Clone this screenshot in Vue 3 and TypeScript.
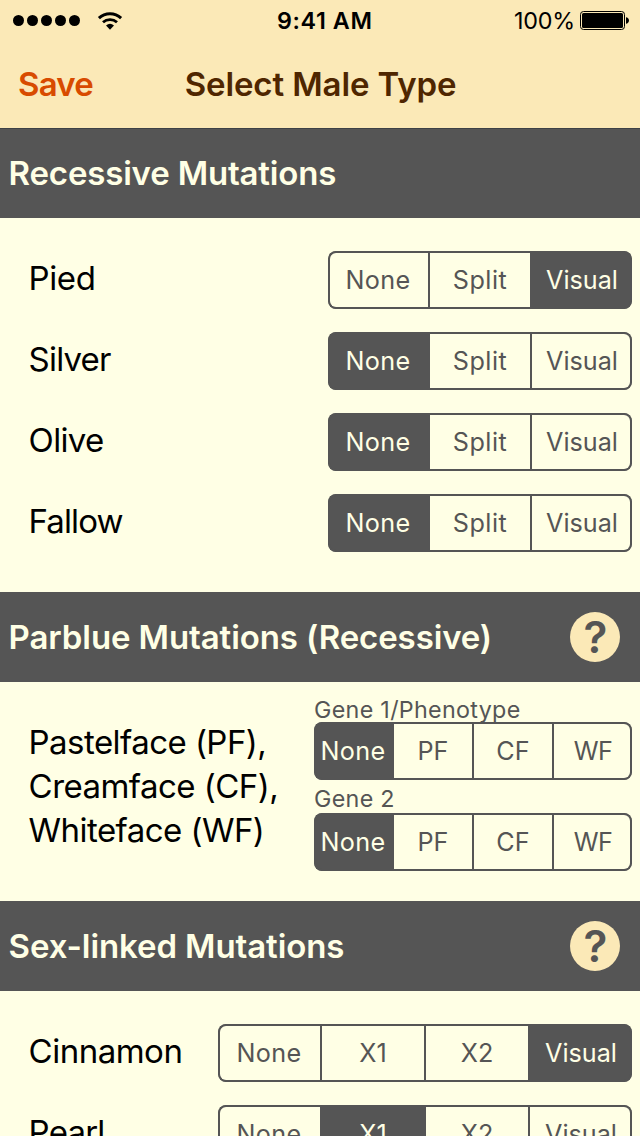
<script setup lang="ts">
import { reactive } from 'vue'

interface Picker {
  caption?: string
  options: string[]
  selected: number
}
interface Row {
  lines: string[]
  tracking: number
  pickers: Picker[]
}
interface Section {
  title: string
  kind: 'autosomal' | 'gene' | 'linked'
  help: boolean
  rows: Row[]
}

const split = ['None', 'Split', 'Visual']
const genes = ['None', 'PF', 'CF', 'WF']
const linked = ['None', 'X1', 'X2', 'Visual']

const row = (name: string, tracking: number, options: string[], selected: number): Row => ({
  lines: [name],
  tracking,
  pickers: [{ options, selected }],
})

const sections = reactive<Section[]>([
  {
    title: 'Recessive Mutations',
    kind: 'autosomal',
    help: false,
    rows: [
      row('Pied', -0.4, split, 2),
      row('Silver', -0.8, split, 0),
      row('Olive', -0.7, split, 0),
      row('Fallow', -0.9, split, 0),
    ],
  },
  {
    title: 'Parblue Mutations (Recessive)',
    kind: 'gene',
    help: true,
    rows: [
      {
        lines: ['Pastelface (PF),', 'Creamface (CF),', 'Whiteface (WF)'],
        tracking: -0.55,
        pickers: [
          { caption: 'Gene 1/Phenotype', options: genes, selected: 0 },
          { caption: 'Gene 2', options: genes, selected: 0 },
        ],
      },
    ],
  },
  {
    title: 'Sex-linked Mutations',
    kind: 'linked',
    help: true,
    rows: [row('Cinnamon', -0.5, linked, 3), row('Pearl', -0.8, linked, 1)],
  },
])
</script>

<template>
  <div class="screen">
    <header class="top">
      <div class="status">
        <div class="left">
          <i v-for="n in 5" :key="n" class="dot"></i>
          <svg class="wifi" width="26" height="20" viewBox="0 0 26 20">
            <path d="M1.9 7.1a16.2 16.2 0 0 1 22.2 0" fill="none" stroke="#000" stroke-width="3" />
            <path d="M6 11.3a10.3 10.3 0 0 1 14 0" fill="none" stroke="#000" stroke-width="2.8" />
            <path d="M9 14.4a6.2 6.2 0 0 1 8 0L13 18.7z" />
          </svg>
        </div>
        <div class="clock">9:41 AM</div>
        <div class="right">
          <span class="percent">100%</span>
          <svg class="battery" width="50" height="20" viewBox="0 0 50 20">
            <rect x=".5" y=".5" width="44" height="18" rx="3" fill="none" stroke="#000" />
            <rect x="2" y="2" width="41" height="15" rx="1.5" />
            <path d="M46 6.2c1.6.2 3 1.5 3 3.3s-1.4 3.1-3 3.3z" />
          </svg>
        </div>
      </div>
      <div class="nav">
        <button class="save">Save</button>
        <h1>Select Male Type</h1>
      </div>
    </header>

    <section v-for="s in sections" :key="s.title" :class="s.kind">
      <div class="heading">
        <h2>{{ s.title }}</h2>
        <button v-if="s.help" class="help">?</button>
      </div>
      <div class="body">
        <div v-for="r in s.rows" :key="r.lines[0]" class="row">
          <div class="label" :style="{ letterSpacing: r.tracking + 'px' }">
            <div v-for="l in r.lines" :key="l">{{ l }}</div>
          </div>
          <div class="pickers">
            <div v-for="(p, pi) in r.pickers" :key="pi">
              <div v-if="p.caption" class="caption">{{ p.caption }}</div>
              <div class="segments">
                <button
                  v-for="(o, i) in p.options"
                  :key="o"
                  :class="['segment', o.toLowerCase(), { on: i === p.selected }]"
                  @click="p.selected = i"
                >
                  {{ o }}
                </button>
              </div>
            </div>
          </div>
        </div>
      </div>
    </section>
  </div>
</template>

<style>
body {
  background: #ffffe5;
}
</style>

<style scoped>
.screen {
  width: 640px;
  height: 1136px;
  overflow: hidden;
  background: #ffffe5;
  color: #000;
  font-family: Inter, 'Liberation Sans', sans-serif;
}
button {
  border: 0;
  margin: 0;
  padding: 0;
  background: none;
  font-family: inherit;
}
h1,
h2 {
  margin: 0;
  font-size: 33px;
  font-weight: 600;
  white-space: nowrap;
}
.top {
  height: 128px;
  background: #fbe9b7;
}
.status {
  display: grid;
  grid-template-columns: 264px auto 1fr;
  height: 40px;
  padding: 0 10px 0 13px;
  font-size: 23.3px;
  line-height: 41px;
}
.left {
  display: flex;
  align-items: center;
  gap: 3px;
}
.dot {
  width: 11px;
  height: 11px;
  border-radius: 50%;
  background: #000;
}
.wifi {
  margin-left: 14px;
}
.clock {
  font-weight: 600;
  letter-spacing: 0.6px;
}
.right {
  display: flex;
  justify-content: flex-end;
}
.percent {
  letter-spacing: -0.2px;
}
.battery {
  margin: 11px 0 0 5px;
}
.nav {
  display: grid;
  grid-template-columns: 1fr auto 1fr;
  height: 88px;
  padding-left: 18px;
  line-height: 88px;
}
.save {
  justify-self: start;
  color: #d84b00;
  font-size: 33px;
  font-weight: 600;
  line-height: 88px;
  letter-spacing: -0.75px;
}
.nav h1 {
  margin-right: 17px;
  color: #4f2600;
  letter-spacing: -0.11px;
}
.heading {
  display: flex;
  align-items: center;
  justify-content: space-between;
  box-sizing: border-box;
  height: 90px;
  padding: 0 20px 0 8.6px;
  background: #555;
  color: #ffffe5;
}
.heading h2 {
  letter-spacing: -0.1px;
}
.autosomal .heading {
  padding-bottom: 1px;
  border-top: 1px solid #3e4246;
}
.autosomal .heading h2 {
  letter-spacing: -0.18px;
}
.help {
  width: 50px;
  height: 50px;
  padding-left: 1px;
  border-radius: 50%;
  background: #fbe9b7;
  color: #555;
  font-size: 44px;
  font-weight: 600;
  line-height: 50px;
  text-align: center;
}
.body {
  display: flex;
  flex-direction: column;
  gap: 23px;
  padding: 33px 8px 40px 28.6px;
}
.row {
  display: flex;
  justify-content: space-between;
}
.label {
  margin-top: -2px;
  font-size: 33px;
  line-height: 58px;
  white-space: nowrap;
}
.pickers {
  width: 304px;
}
.linked .pickers {
  width: 414px;
}
.gene .pickers {
  width: 318px;
}
.gene .body {
  padding-top: 14px;
  padding-bottom: 30px;
}
.gene .label {
  margin-top: 24px;
  line-height: 44px;
}
.caption {
  height: 26px;
  color: #555;
  font-size: 23.3px;
  line-height: 27px;
  letter-spacing: 0.3px;
}
.pickers > div + div .caption {
  height: 33px;
  line-height: 37px;
}
.segments {
  display: grid;
  grid-auto-flow: column;
  grid-auto-columns: minmax(0, 1fr);
  gap: 2px;
  height: 58px;
  border-radius: 8px;
  overflow: hidden;
  background: #555;
}
.segment {
  box-sizing: border-box;
  border: solid #555;
  border-width: 2px 0;
  background: #ffffe5;
  color: #555;
  font-size: 25.2px;
  line-height: 54px;
  text-align: center;
  white-space: nowrap;
}
.segment:first-child {
  padding-right: 2px;
  border-left-width: 2px;
  border-radius: 8px 0 0 8px;
}
.segment:last-child {
  padding-left: 2px;
  border-right-width: 2px;
  border-radius: 0 8px 8px 0;
}
.segment.on {
  background: #555;
  color: #ffffe5;
}
.none {
  letter-spacing: 0.3px;
}
.split {
  letter-spacing: 0.5px;
}
.wf {
  letter-spacing: -0.5px;
}
</style>
